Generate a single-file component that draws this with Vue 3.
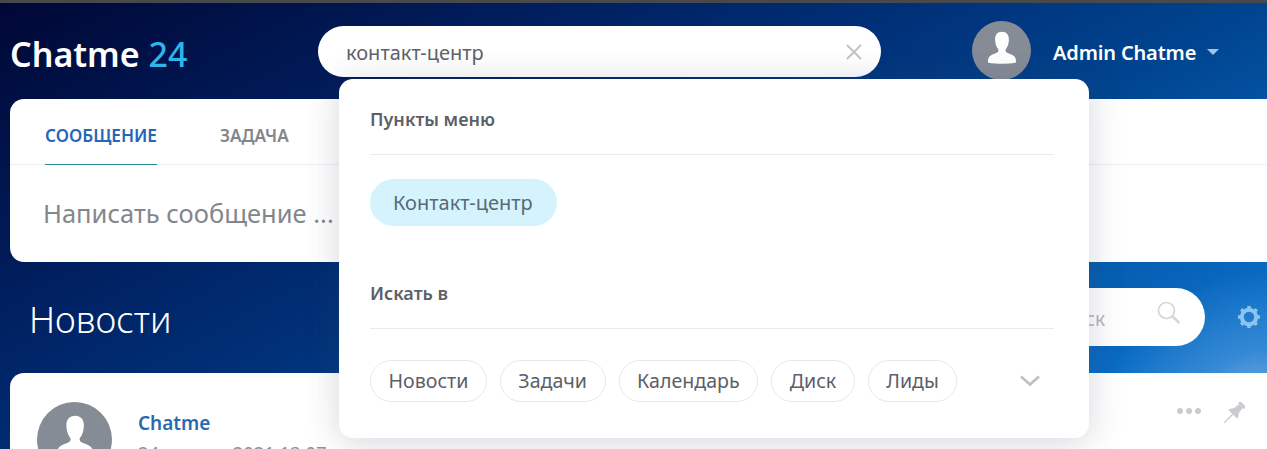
<template>
  <div class="page">
    <div class="top-line"></div>

    <header class="topbar">
      <div class="logo">Chatme <span>24</span></div>

      <div class="search-wrap">
        <div class="search">
          <span class="search-text">контакт-центр</span>
          <svg class="clear" width="20" height="20" viewBox="0 0 20 20">
            <path d="M3 3l14 14M17 3L3 17" stroke="#c2c5c9" stroke-width="2" fill="none" />
          </svg>
        </div>

        <div class="dropdown">
          <div class="section-title">Пункты меню</div>
          <div class="menu-items">
            <span class="menu-chip">Контакт-центр</span>
          </div>
          <div class="section-title">Искать в</div>
          <div class="chips">
            <span v-for="item in scopes" :key="item" class="chip">{{ item }}</span>
            <svg class="more" width="22" height="14" viewBox="0 0 22 14">
              <path d="M2 2.500l9 8 9-8" stroke="#bcbfc4" stroke-width="2.600" fill="none" />
            </svg>
          </div>
        </div>
      </div>

      <div class="user">
        <div class="avatar small">
          <svg viewBox="0 0 60 60" width="59" height="59">
            <path :d="personPath" fill="#fff" />
          </svg>
        </div>
        <span class="user-name">Admin Chatme</span>
        <span class="caret"></span>
      </div>
    </header>

    <section class="card composer">
      <div class="tabs">
        <span class="tab active">СООБЩЕНИЕ</span>
        <span class="tab">ЗАДАЧА</span>
      </div>
      <div class="placeholder">Написать сообщение ...</div>
    </section>

    <div class="title-row">
      <h1>Новости</h1>
      <div class="title-tools">
        <div class="filter">
          <span>Поиск</span>
          <svg width="26" height="26" viewBox="0 0 26 26">
            <circle cx="10.500" cy="10.500" r="8" stroke="#d3d5d8" stroke-width="1.600" fill="none" />
            <path d="M16.500 16.500l7 6.500" stroke="#d3d5d8" stroke-width="2.400" fill="none" />
          </svg>
        </div>
        <svg class="gear" width="24" height="24" viewBox="0 0 24 24">
          <circle cx="12" cy="12" r="7.200" stroke="#8cc4f0" stroke-width="4" fill="none" />
          <path
            d="M12 1v4M12 19v4M1 12h4M19 12h4M4.200 4.200l2.800 2.800M17 17l2.800 2.800M19.800 4.200L17 7M7 17l-2.800 2.800"
            stroke="#8cc4f0"
            stroke-width="3.400"
            fill="none"
          />
        </svg>
      </div>
    </div>

    <section class="card post">
      <div class="avatar big">
        <svg viewBox="0 0 60 60" width="75" height="75">
          <path :d="personPath" fill="#fff" />
        </svg>
      </div>
      <div class="post-info">
        <div class="post-author">Chatme</div>
        <div class="post-date">24 января 2021 13:07</div>
      </div>
      <div class="post-tools">
        <span class="dots"><i></i><i></i><i></i></span>
        <svg width="22" height="22" viewBox="0 0 24 24">
          <g transform="rotate(45 12 12)" fill="#c9cbd0">
            <rect x="7" y="-2" width="10" height="3" rx="1" />
            <path d="M9 1h6l.6 7 3 4.500v1.500H5.400v-1.500l3-4.500z" />
            <rect x="11.300" y="14" width="1.400" height="13" />
          </g>
        </svg>
      </div>
    </section>
  </div>
</template>

<script setup>
const scopes = ['Новости', 'Задачи', 'Календарь', 'Диск', 'Лиды']

// same silhouette for both avatars
const personPath =
  'M30.500 11c-4.300 0-7 2.800-7 7.500 0 3.800 1 7.500 3 10 .7 1 .5 2.600-.5 3.300-2 1.400-6 2.200-8 4-1.400 1.300-1.900 3.800-1.800 6.300 4 1 10 1.400 14.300 1.400s10.300-.4 14.300-1.400c.1-2.500-.4-5-1.800-6.300-2-1.800-6-2.600-8-4-1-.7-1.200-2.300-.5-3.300 2-2.500 3-6.200 3-10 0-4.700-2.700-7.500-7-7.500z'
</script>

<style scoped>
.page {
  position: relative;
  width: 1267px;
  height: 449px;
  overflow: hidden;
  font-family: "Noto Sans", "Open Sans", sans-serif;
  background:
    radial-gradient(circle at 1267px 440px, rgba(190, 215, 240, 0.8) 0, rgba(120, 180, 235, 0.35) 90px, rgba(120, 180, 235, 0) 170px),
    linear-gradient(152deg, #000735 0%, #001c5a 24%, #003078 44%, #00448f 60%, #0a6cc4 86%, #1f7ed0 100%);
}

.top-line {
  height: 3px;
  background: #47494d;
}

.topbar {
  height: 96px;
  display: flex;
  align-items: flex-start;
}

.logo {
  width: 318px;
  padding: 28px 0 0 10px;
  box-sizing: border-box;
  font-size: 34px;
  line-height: 46px;
  font-weight: 600;
  color: #fff;
}

.logo span {
  color: #2fb4ec;
  font-weight: 500;
}

.search-wrap {
  position: relative;
  width: 563px;
  margin-top: 23px;
}

.search {
  height: 51px;
  padding: 0 17px 0 28px;
  display: flex;
  align-items: center;
  justify-content: space-between;
  background: #fff;
  border-radius: 26px;
}

.search-text {
  padding-top: 2px;
  font-size: 20px;
  color: #5f6368;
}

.dropdown {
  position: absolute;
  z-index: 5;
  top: 53px;
  left: 21px;
  width: 750px;
  height: 359px;
  padding: 25px 35px 0 31px;
  box-sizing: border-box;
  background: #fff;
  border-radius: 14px;
  box-shadow: 0 4px 34px rgba(60, 70, 90, 0.22);
}

.section-title {
  padding-bottom: 20px;
  font-size: 18px;
  line-height: 30px;
  font-weight: 600;
  color: #5c6168;
  border-bottom: 1px solid #e9ebed;
}

.menu-items {
  height: 123px;
  padding-top: 24px;
  box-sizing: border-box;
}

.menu-chip {
  display: inline-block;
  padding: 0 24px 0 23px;
  font-size: 20px;
  line-height: 47px;
  color: #586a75;
  background: #d5f3fc;
  border-radius: 24px;
}

.chips {
  display: flex;
  align-items: center;
  gap: 13px;
  padding-top: 31px;
}

.chip {
  padding: 0 17.500px;
  font-size: 19.600px;
  line-height: 40px;
  color: #5b6068;
  border: 1px solid #e6e8ea;
  border-radius: 22px;
}

.more {
  margin-left: 49px;
}

.user {
  display: flex;
  align-items: center;
  margin: 18px 0 0 91px;
}

.avatar {
  display: flex;
  flex-shrink: 0;
  overflow: hidden;
  background: #858c96;
  border-radius: 50%;
}

.avatar.small {
  width: 59px;
  height: 59px;
}

.user-name {
  margin-left: 22px;
  padding-top: 4px;
  font-size: 20px;
  font-weight: 600;
  letter-spacing: -0.15px;
  color: #fff;
}

.caret {
  margin: 2px 0 0 11px;
  border-top: 6px solid #a6c1e3;
  border-left: 6px solid transparent;
  border-right: 6px solid transparent;
}

.card {
  margin-left: 10px;
  width: 1290px;
  background: #fff;
  border-radius: 14px;
}

.composer {
  height: 163px;
}

.tabs {
  height: 66px;
  padding-left: 35px;
  display: flex;
  gap: 63px;
  box-sizing: border-box;
  border-bottom: 1px solid #eceef0;
}

.tab {
  height: 66px;
  box-sizing: border-box;
  padding-top: 25px;
  font-size: 17.200px;
  line-height: 24px;
  font-weight: 600;
  color: #82868b;
}

.tab.active {
  color: #2566b8;
  border-bottom: 1px solid #2a8a9d;
}

.placeholder {
  padding: 31px 0 0 33px;
  font-size: 25.500px;
  line-height: 34px;
  color: #83878c;
}

.title-row {
  height: 111px;
  display: flex;
  justify-content: space-between;
  padding: 0 6px 0 29px;
}

.title-row h1 {
  margin: 34px 0 0;
  font-size: 36px;
  line-height: 48px;
  font-weight: 300;
  color: #fff;
}

.title-tools {
  display: flex;
  align-items: flex-start;
  gap: 32px;
  padding-top: 26px;
}

.filter {
  width: 300px;
  height: 58px;
  padding: 4px 25px 0 0;
  box-sizing: border-box;
  display: flex;
  align-items: center;
  justify-content: flex-end;
  gap: 52px;
  background: #fff;
  border-radius: 29px;
  font-size: 19px;
  color: #b4b7bb;
}

.filter svg {
  margin: -12px -2px 0 -1px;
}

.gear {
  margin-top: 17px;
}

.post {
  height: 200px;
  padding: 29px 0 0 27px;
  box-sizing: border-box;
  display: flex;
}

.avatar.big {
  width: 75px;
  height: 75px;
}

.post-info {
  margin-left: 26px;
  flex: 1;
}

.post-author {
  font-size: 19px;
  line-height: 42px;
  font-weight: 600;
  color: #2a69ad;
}

.post-date {
  font-size: 18.400px;
  line-height: 20px;
  margin-top: -1px;
  color: #8c9096;
}

.post-tools {
  width: 103px;
  display: flex;
  align-items: flex-start;
  gap: 22px;
  position: relative;
  right: 20px;
}

.dots {
  display: flex;
  gap: 3px;
  margin-top: 6px;
}

.dots i {
  width: 6px;
  height: 6px;
  background: #c9cbd0;
  border-radius: 50%;
}
</style>
